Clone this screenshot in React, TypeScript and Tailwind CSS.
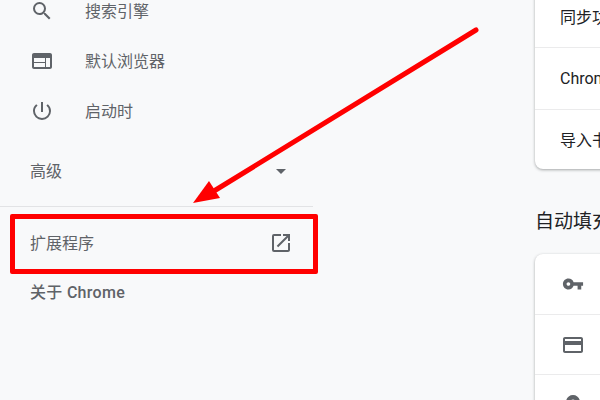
import React from 'react';
import {
  MdSearch,
  MdWeb,
  MdPowerSettingsNew,
  MdArrowDropDown,
  MdOpenInNew,
  MdVpnKey,
  MdCreditCard,
  MdLocationOn,
} from 'react-icons/md';

const navItems = [
  { label: '搜索引擎', Icon: MdSearch },
  { label: '默认浏览器', Icon: MdWeb },
  { label: '启动时', Icon: MdPowerSettingsNew },
];

const syncRows = [
  { label: '同步功能和 Google 服务', cls: 'h-[61px] pt-[3px]' },
  { label: 'Chrome 名称和头像', cls: 'h-[62px] border-t border-[#ebebec]' },
  { label: '导入书签和设置', cls: 'h-[60px] pt-[3px] border-t border-[#ebebec]' },
];

const App: React.FC = () => {
  return (
    <div className="relative flex h-[400px] w-[600px] overflow-hidden bg-[#f8f9fa] font-['Roboto','Noto_Sans_CJK_SC',sans-serif]">
      {/* Sidebar */}
      <nav className="w-[313px] shrink-0 -mt-[14px] text-[16px] text-[#5f6368]">
        {navItems.map(({ label, Icon }) => (
          <div key={label} className="flex h-[50px] items-center pl-[30px]">
            <Icon size={24} className="mr-[31px] shrink-0" />
            <span className="pt-[2px]">{label}</span>
          </div>
        ))}
        <div className="mt-[10px] flex h-[50px] items-center justify-between pl-[30px] pr-[20px]">
          <span className="pt-[2px]">高级</span>
          <MdArrowDropDown size={24} />
        </div>
        <div className="mt-[10px] h-px bg-[#e2e3e5]" />
        <div className="mt-[6px] flex h-[60px] items-center justify-between pl-[30px] pr-[20px]">
          <span className="pt-[2px]">扩展程序</span>
          <MdOpenInNew size={24} />
        </div>
        <div className="flex h-[38px] items-center pl-[30px]">
          <span className="pt-[2px] font-medium tracking-[0.3px]">关于 Chrome</span>
        </div>
      </nav>

      {/* Settings column */}
      <main className="ml-[222px] w-[400px] shrink-0 text-[#202124]">
        <section className="-mt-[14px] rounded-b-lg bg-white shadow-[0_1px_3px_rgba(60,64,67,0.45)]">
          {syncRows.map((row) => (
            <div key={row.label} className={`flex items-center whitespace-nowrap pl-[25px] text-[16px] ${row.cls}`}>
              {row.label}
            </div>
          ))}
        </section>
        <h2 className="mt-[40px] text-[19px] font-normal leading-[26px] whitespace-nowrap">自动填充</h2>
        <section className="mt-[19px] rounded-t-lg bg-white text-[#5f6368] shadow-[0_1px_3px_rgba(60,64,67,0.45)]">
          <div className="flex h-[60px] items-center pl-[27px]">
            <MdVpnKey size={22} />
          </div>
          <div className="flex h-[60px] items-center border-t border-[#ebebec] pl-[26px]">
            <MdCreditCard size={24} />
          </div>
          <div className="flex h-[60px] items-center border-t border-[#ebebec] pl-[26px]">
            <MdLocationOn size={24} />
          </div>
        </section>
      </main>

      {/* Red annotation */}
      <div className="absolute left-[10px] top-[214px] h-[60px] w-[308px] rounded-[2px] border-[5px] border-[#ff0000]" />
      <svg className="absolute inset-0" width="600" height="400" viewBox="0 0 600 400" fill="none">
        <path d="M476 30 L214 191" stroke="#ff0000" strokeWidth="5" strokeLinecap="round" />
        <path d="M193 203 L209 181 L220 198 Z" fill="#ff0000" />
      </svg>
    </div>
  );
};

export default App;
